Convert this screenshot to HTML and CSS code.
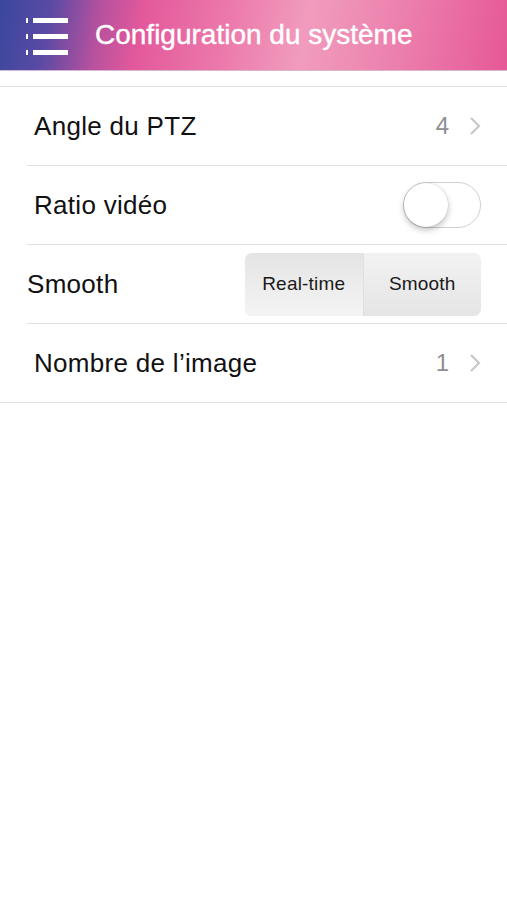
FILE: index.html
```html
<!DOCTYPE html>
<html>
<head>
    <title>Configuration du système</title>
    <link rel="stylesheet" href="styles.css">
</head>
<body>
    <div class="header">
        <svg class="menu-icon" width="44" height="40" viewBox="0 0 44 40">
            <rect x="0" y="2" width="2" height="5" fill="#fff"/>
            <rect x="7" y="2" width="35" height="5" fill="#fff"/>
            <rect x="0" y="18" width="2" height="5" fill="#fff"/>
            <rect x="7" y="18" width="35" height="5" fill="#fff"/>
            <rect x="0" y="34" width="2" height="5" fill="#fff"/>
            <rect x="7" y="34" width="35" height="5" fill="#fff"/>
        </svg>
        <h1>Configuration du système</h1>
    </div>

    <div class="settings">
        <div class="row">
            <span class="label">Angle du PTZ</span>
            <span class="value">4</span>
            <svg class="chevron" width="12" height="20" viewBox="0 0 12 20"><path d="M2 2 L10 10 L2 18" fill="none" stroke="#c7c7cc" stroke-width="2.2"/></svg>
        </div>
        <div class="row">
            <span class="label">Ratio vidéo</span>
            <div class="toggle"><div class="knob"></div></div>
        </div>
        <div class="row row-smooth">
            <span class="label">Smooth</span>
            <div class="segmented">
                <div class="segment active">Real-time</div>
                <div class="segment">Smooth</div>
            </div>
        </div>
        <div class="row">
            <span class="label">Nombre de l’image</span>
            <span class="value">1</span>
            <svg class="chevron" width="12" height="20" viewBox="0 0 12 20"><path d="M2 2 L10 10 L2 18" fill="none" stroke="#c7c7cc" stroke-width="2.2"/></svg>
        </div>
    </div>
</body>
</html>
```

FILE: styles.css
```css
body {
    margin: 0;
    font-family: "Liberation Sans", Arial, sans-serif;
    background: white;
    color: #111;
}
.header {
    height: 70px;
    display: flex;
    align-items: center;
    padding-left: 26px;
    background: linear-gradient(100deg, #3a479d 0%, #5a4aa4 10%, #b8519e 20%, #e3599b 28%, #ec7aab 45%, #f19cbe 60%, #ec80ad 78%, #e65896 100%);
    border-bottom: 1px solid #d7b6d2;
}
.menu-icon {
    display: block;
    margin-top: 2px;
}
.header h1 {
    margin: 0 0 0 25px;
    font-size: 28px;
    font-weight: normal;
    color: white;
    -webkit-text-stroke: 0.4px white;
}
.settings {
    margin-top: 15px;
    border-top: 1px solid #e0e0e0;
    border-bottom: 1px solid #e0e0e0;
}
.row {
    height: 78px;
    margin-left: 27px;
    padding-left: 7px;
    padding-right: 26px;
    display: flex;
    align-items: center;
    border-bottom: 1px solid #e0e0e0;
}
.row:last-child {
    border-bottom: none;
}
.label {
    flex: 1;
    font-size: 26px;
    letter-spacing: 0.3px;
}
.row-smooth {
    padding-left: 0;
}
.value {
    font-size: 24px;
    color: #8e8e93;
    margin-right: 20px;
}
.chevron {
    display: block;
}
.toggle {
    width: 76px;
    height: 44px;
    border: 1px solid #d0d0d0;
    border-radius: 23px;
    background: #fff;
    position: relative;
}
.knob {
    position: absolute;
    left: 0;
    top: 0;
    width: 44px;
    height: 44px;
    border-radius: 50%;
    background: #fff;
    box-shadow: 0 3px 6px rgba(0,0,0,0.25), 0 0 0 0.5px rgba(0,0,0,0.1);
}
.segmented {
    display: flex;
    width: 236px;
    height: 63px;
    border-radius: 7px;
    overflow: hidden;
    background: linear-gradient(#f2f2f2, #e5e5e5);
}
.segment {
    flex: 1;
    display: flex;
    align-items: center;
    justify-content: center;
    font-size: 19px;
    letter-spacing: 0.2px;
    color: #1a1a1a;
}
.segment.active {
    background: linear-gradient(#e4e4e4, #f4f4f4);
    border-right: 1px solid #e0e0e0;
}
```
